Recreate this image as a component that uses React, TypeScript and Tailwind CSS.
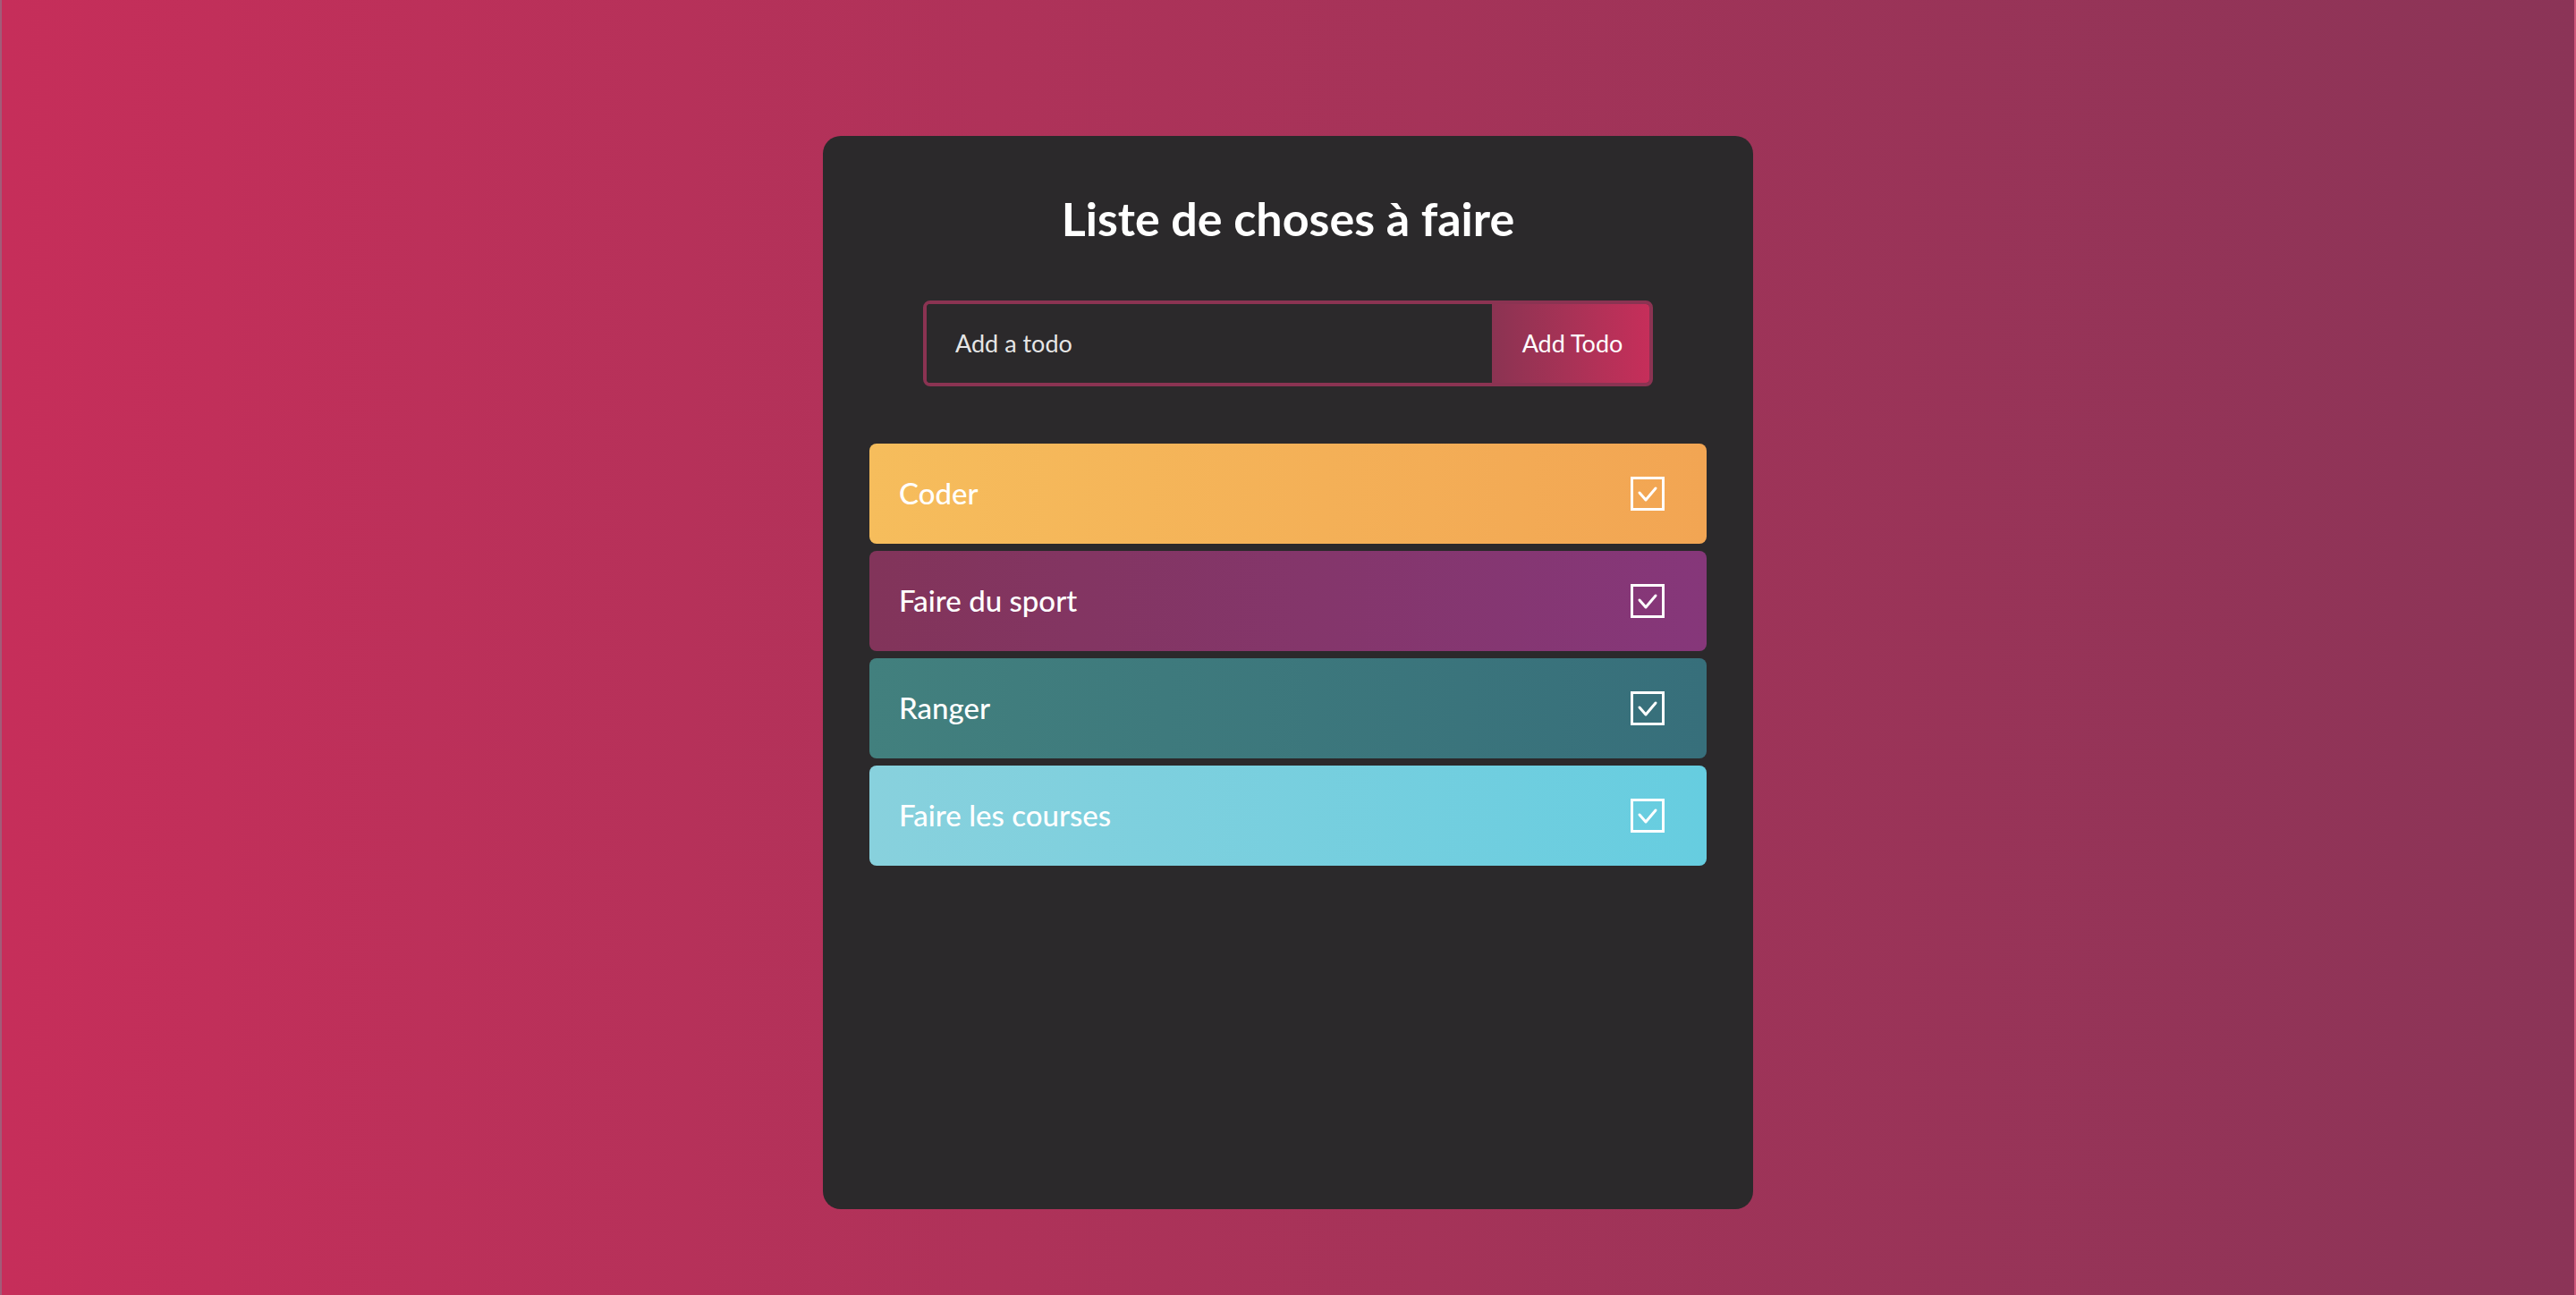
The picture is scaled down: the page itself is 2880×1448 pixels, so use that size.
import React from 'react';

const todos = [
  { id: 1, text: 'Coder', bg: 'bg-gradient-to-r from-[#f6bd5c] to-[#f2a553]' },
  { id: 2, text: 'Faire du sport', bg: 'bg-gradient-to-r from-[#82345a] to-[#86377a]' },
  { id: 3, text: 'Ranger', bg: 'bg-gradient-to-r from-[#42807e] to-[#376f7b]' },
  { id: 4, text: 'Faire les courses', bg: 'bg-gradient-to-r from-[#88d1dd] to-[#66cde0]' },
];

function CheckBox() {
  return (
    <svg width="38" height="38" viewBox="0 0 38 38" fill="none">
      <rect x="1.5" y="1.5" width="35" height="35" stroke="white" strokeWidth="3" />
      <path d="M10 18l7 8 11-13" stroke="white" strokeWidth="3" strokeLinecap="round" strokeLinejoin="round" />
    </svg>
  );
}

export default function App() {
  return (
    <div className="min-h-screen w-full bg-gradient-to-r from-[#c62e5a] to-[#8b3457] border-x-2 border-white/20 flex justify-center pt-[152px] pb-[96px] font-['Lato','Liberation_Sans',sans-serif]">
      <div className="w-[1040px] h-[1200px] bg-[#2b292b] rounded-[20px] flex flex-col">
        {/* Title */}
        <h1 className="text-white text-[52px] font-bold text-center mt-[62px] leading-[60px]">
          Liste de choses à faire
        </h1>

        {/* Add form */}
        <form
          className="mx-auto mt-[62px] w-[816px] h-[96px] flex rounded-[8px] border-4 border-[#8b3352] overflow-hidden"
          onSubmit={(e) => e.preventDefault()}
        >
          <input
            autoFocus
            className="flex-1 bg-[#2b292b] text-white caret-white text-[27px] px-[32px] outline-none placeholder:text-[#e6e6e6]"
            placeholder="Add a todo"
          />
          <button className="w-[176px] bg-gradient-to-r from-[#8b3352] to-[#c62e5a] text-white text-[27px] pl-[4px]">
            Add Todo
          </button>
        </form>

        {/* Todo list */}
        <div className="flex flex-col gap-[8px] px-[52px] mt-[64px]">
          {todos.map((todo) => (
            <div
              key={todo.id}
              className={`${todo.bg} h-[112px] rounded-[8px] flex items-center justify-between pl-[33px] pr-[47px]`}
            >
              <span className="text-white text-[33px] font-medium">{todo.text}</span>
              <CheckBox />
            </div>
          ))}
        </div>
      </div>
    </div>
  );
}
